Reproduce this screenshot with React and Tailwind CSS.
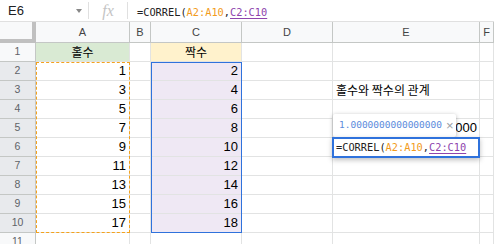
import React from "react";

const COLS = ["A", "B", "C", "D", "E", "F"];
const SANS = { fontFamily: '"Liberation Sans", Arial, sans-serif' };

function Formula() {
  return (
    <span className="whitespace-nowrap font-['DejaVu_Sans_Mono',monospace] text-[10.3px] tracking-[0px]">
      <span className="text-[#222]">=CORREL(</span>
      <span className="text-[#f29b1c]">A2:A10</span>
      <span className="text-[#222]">,</span>
      <span className="text-[#8e44ad] underline underline-offset-2">C2:C10</span>
    </span>
  );
}

export default function App() {
  const rows = Array.from({ length: 11 }, (_, i) => i + 1);
  const cell = (r, c) => {
    if (r === 1 && c === "A") return { text: "홀수", cls: "bg-[#d9ead3] justify-center", kr: true };
    if (r === 1 && c === "C") return { text: "짝수", cls: "bg-[#fff2cc] justify-center", kr: true };
    if (r >= 2 && r <= 10 && c === "A") return { text: String(2 * (r - 1) - 1), cls: "justify-end pr-[3px]" };
    if (r >= 2 && r <= 10 && c === "C") return { text: String(2 * (r - 1)), cls: "bg-[#efe8f4] justify-end pr-[3px]" };
    if (r === 3 && c === "E") return { text: "홀수와 짝수의 관계", cls: "justify-start pl-[3px]", kr: true };
    if (r === 5 && c === "E") return { text: "000", cls: "justify-end pr-[2px]" };
    return { text: "", cls: "" };
  };

  return (
    <div className="relative w-[494px] h-[244px] overflow-hidden bg-white" style={SANS}>
      {/* formula bar */}
      <div className="flex items-center h-[22px] border-b border-[#e0e0e0]">
        <div className="w-[88px] flex items-center pl-[8px] pr-[6px] text-[13px] text-[#202124]">
          <span className="flex-1">E6</span>
          <span className="w-0 h-0 border-l-[3.5px] border-r-[3.5px] border-t-[4px] border-l-transparent border-r-transparent border-t-[#888]"></span>
        </div>
        <div className="w-px h-[17px] bg-[#e0e0e0]"></div>
        <div className="w-[38px] flex justify-center">
          <span className="italic text-[16px] text-[#c4c4c4] font-['Liberation_Serif',serif] leading-none">fx</span>
        </div>
        <div className="w-px h-[17px] bg-[#e0e0e0]"></div>
        <div className="pl-[9px]">
          <Formula />
        </div>
      </div>

      {/* grid */}
      <div className="grid grid-cols-[36px_94px_21px_91px_91px_147px_1fr]">
        <div className="h-[21px] bg-[#f8f9fa] border-r-[4px] border-b-[4px] border-[#c0c0c0]"></div>
        {COLS.map((c) => (
          <div
            key={c}
            className="h-[21px] bg-[#f8f9fa] border-r border-b border-[#c4c7c5] flex items-center justify-center text-[11px] text-[#444]"
          >
            {c}
          </div>
        ))}
        {rows.map((r) => (
          <React.Fragment key={r}>
            <div
              className={`h-[19px] ${
                r >= 2 && r <= 10 ? "bg-[#e8eaed]" : "bg-[#f8f9fa]"
              } border-r border-b border-[#c4c7c5] flex items-center justify-center text-[10.5px] text-[#5f6368]`}
            >
              {r}
            </div>
            {COLS.map((c) => {
              const d = cell(r, c);
              return (
                <div
                  key={c}
                  className={`h-[19px] border-r border-b border-[#e2e3e3] flex items-center overflow-hidden whitespace-nowrap text-[13px] text-black ${d.cls}`}
                  style={d.kr ? { fontFamily: '"Noto Sans CJK KR", sans-serif', fontSize: "12px" } : undefined}
                >
                  {d.text}
                </div>
              );
            })}
          </React.Fragment>
        ))}
      </div>

      {/* orange dashed range A2:A10 */}
      <div className="absolute left-[36px] top-[62px] w-[94px] h-[171px] border border-dashed border-[#f4a21c] pointer-events-none"></div>
      {/* blue range C2:C10 */}
      <div className="absolute left-[151px] top-[62px] w-[91px] h-[171px] border border-[#2f72dc] pointer-events-none"></div>

      {/* result tooltip */}
      <div className="absolute left-[333px] top-[114px] w-[123px] h-[23px] bg-white rounded-[2px] shadow-[0_1px_4px_rgba(0,0,0,0.3)] flex items-center pl-[6px]">
        <span className="font-['DejaVu_Sans_Mono',monospace] text-[9.5px] text-[#5b8bdc]">1.0000000000000000</span>
        <span className="ml-[4px] text-[13px] leading-none text-[#9aa0a6]">×</span>
        <div className="absolute left-[4px] bottom-[-4px] w-[7px] h-[7px] bg-white rotate-45 shadow-[1px_1px_1px_rgba(0,0,0,0.15)]"></div>
      </div>

      {/* cell editor E6 */}
      <div className="absolute left-[332px] top-[137px] w-[148px] h-[21px] bg-white border-2 border-[#2f72dc] shadow-[0_2px_5px_rgba(0,0,0,0.25)] flex items-center pl-[2px]">
        <Formula />
      </div>
    </div>
  );
}
